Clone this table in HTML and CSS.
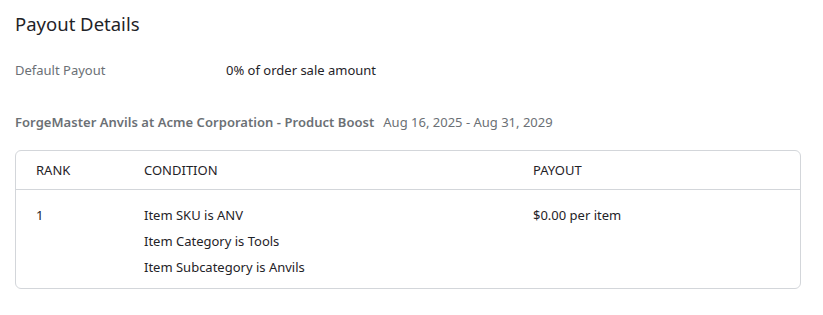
FILE: index.html
```html
<!DOCTYPE html>
<html lang="en">
<head>
<meta charset="utf-8">
<title>Payout Details</title>
<link rel="stylesheet" href="styles.css">
</head>
<body>
<section class="payout">
  <h2 class="payout-title">Payout Details</h2>

  <div class="field-row">
    <div class="field-label">Default Payout</div>
    <div class="field-value">0% of order sale amount</div>
  </div>

  <div class="program">
    <div class="program-head">
      <span class="program-name">ForgeMaster Anvils at Acme Corporation - Product Boost</span>
      <span class="program-dates">Aug 16, 2025 - Aug 31, 2029</span>
    </div>

    <div class="rules">
      <div class="rules-row rules-header">
        <div class="col-rank">RANK</div>
        <div class="col-cond">CONDITION</div>
        <div class="col-pay">PAYOUT</div>
      </div>
      <div class="rules-row rules-body">
        <div class="col-rank">1</div>
        <div class="col-cond">
          <div class="cond-line">Item SKU is ANV</div>
          <div class="cond-line">Item Category is Tools</div>
          <div class="cond-line">Item Subcategory is Anvils</div>
        </div>
        <div class="col-pay">$0.00 per item</div>
      </div>
    </div>
  </div>
</section>
</body>
</html>
```

FILE: styles.css
```css
html, body {
  margin: 0;
  padding: 0;
  background: #ffffff;
}

body {
  font-family: "Noto Sans", "Open Sans", sans-serif;
  color: #1f2328;
}

.payout {
  padding: 11px 22px 0 15px;
}

.payout-title {
  margin: 0;
  font-size: 18.5px;
  font-weight: 400;
  line-height: 25px;
  color: #1f2328;
}

.field-row {
  display: flex;
  align-items: center;
  margin-top: 24px;
  line-height: 20px;
}

.field-label {
  width: 211px;
  font-size: 13px;
  color: #6b7075;
}

.field-value {
  font-size: 13px;
  color: #1f2328;
}

.program {
  margin-top: 32px;
}

.program-head {
  display: flex;
  align-items: baseline;
  gap: 9px;
  line-height: 20px;
  font-size: 13px;
  color: #6b7075;
}

.program-name {
  font-weight: 600;
  letter-spacing: 0.04px;
}

.rules {
  margin-top: 18px;
  border: 1px solid #d3d6da;
  border-radius: 6px;
  font-size: 13px;
}

.rules-row {
  display: flex;
  padding: 0 20px;
}

.rules-header {
  height: 38px;
  align-items: center;
  border-bottom: 1px solid #d3d6da;
}

.rules-body {
  padding-top: 12px;
  padding-bottom: 8px;
}

.rules-body > div {
  line-height: 26px;
}

.col-rank {
  width: 108px;
}

.col-cond {
  width: 389px;
}

.col-pay {
  flex: 1;
}
```
